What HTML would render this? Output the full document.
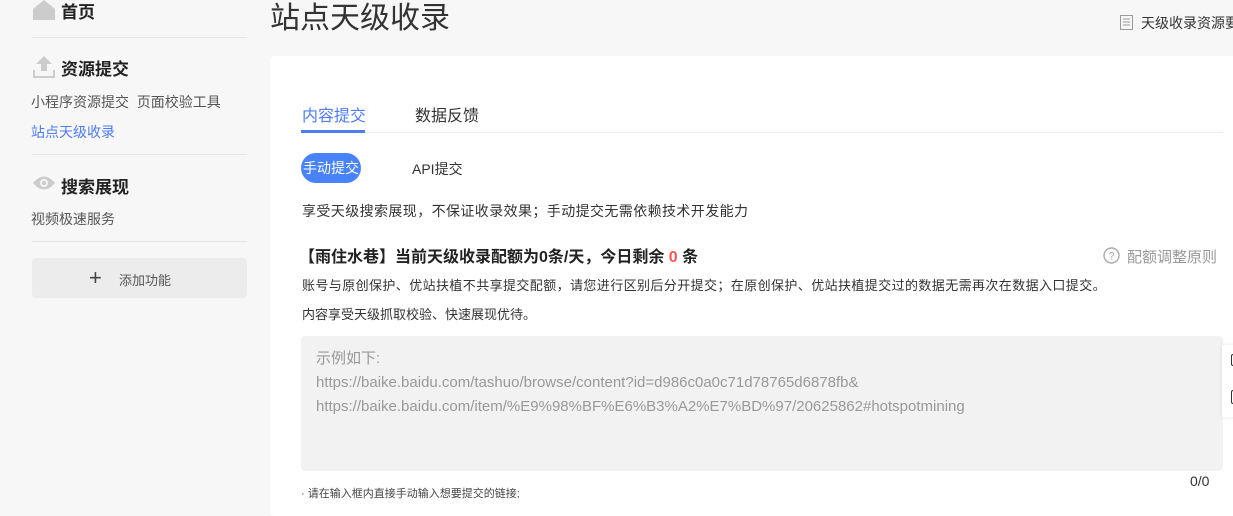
<!DOCTYPE html>
<html><head><meta charset="utf-8"><style>
*{margin:0;padding:0;box-sizing:border-box}
body{width:1233px;height:501px;overflow:hidden;background:#f7f7f7;font-family:"Liberation Sans","Noto Sans CJK SC",sans-serif;color:#333;position:relative}
.a{position:absolute;white-space:nowrap}
.hr{position:absolute;left:32px;width:215px;height:1px;background:#e6e6e6}
</style></head><body>
<svg class="a" style="left:33px;top:0" width="22" height="20" viewBox="0 0 22 20"><path d="M11 0L22 9V20H0V9Z" fill="#ccc"/></svg>
<div class="a" style="left:61px;top:-2px;font-size:17px;font-weight:bold;color:#222">首页</div>
<div class="hr" style="top:37px"></div>
<svg class="a" style="left:33px;top:56px" width="22" height="22" viewBox="0 0 22 22"><path d="M11 0L19 8H14V15H8V8H3Z" fill="#ccc"/><path d="M1 14V21H21V14" fill="none" stroke="#ccc" stroke-width="2"/></svg>
<div class="a" style="left:61px;top:55px;font-size:17px;font-weight:bold;color:#222">资源提交</div>
<div class="a" style="left:31px;top:92px;font-size:14px;color:#555">小程序资源提交&nbsp;&nbsp;页面校验工具</div>
<div class="a" style="left:31px;top:122px;font-size:14px;color:#4e7cf5">站点天级收录</div>
<div class="hr" style="top:154px"></div>
<svg class="a" style="left:33px;top:176px" width="22" height="14" viewBox="0 0 22 14"><path d="M0 7Q11 -6 22 7Q11 20 0 7Z" fill="#ccc"/><circle cx="11" cy="7" r="4" fill="#f7f7f7"/><circle cx="11" cy="7" r="2.3" fill="#ccc"/></svg>
<div class="a" style="left:61px;top:173px;font-size:17px;font-weight:bold;color:#222">搜索展现</div>
<div class="a" style="left:31px;top:209px;font-size:14px;color:#555">视频极速服务</div>
<div class="hr" style="top:241px"></div>
<div class="a" style="left:32px;top:258px;width:215px;height:40px;background:#ececec;border-radius:4px"></div>
<div class="a" style="left:89px;top:267px;font-size:22px;color:#444;line-height:22px">+</div>
<div class="a" style="left:119px;top:270px;font-size:13px;color:#555">添加功能</div>

<div class="a" style="left:270px;top:-7px;font-size:30px;color:#333">站点天级收录</div>
<svg class="a" style="left:1120px;top:15px" width="13" height="15" viewBox="0 0 13 15"><rect x="0.5" y="0.5" width="12" height="14" fill="none" stroke="#999"/><path d="M3 4H10M3 7H10M3 10H10" stroke="#999"/></svg>
<div class="a" style="left:1141px;top:13px;font-size:14px;color:#333">天级收录资源要求</div>

<div class="a" style="left:270px;top:56px;width:970px;height:460px;background:#fff;border-radius:4px"></div>
<div class="a" style="left:302px;top:102px;font-size:16px;color:#4e7cf5">内容提交</div>
<div class="a" style="left:415px;top:102px;font-size:16px;color:#333">数据反馈</div>
<div class="a" style="left:301px;top:132px;width:922px;height:1px;background:#eee"></div>
<div class="a" style="left:301px;top:130px;width:64px;height:3px;background:#4e7cf5"></div>
<div class="a" style="left:301px;top:153px;width:60px;height:30px;border-radius:15px;background:#4883fb;color:#fff;font-size:14px;text-align:center;line-height:30px">手动提交</div>
<div class="a" style="left:412px;top:159px;font-size:14px;color:#333">API提交</div>
<div class="a" style="left:302px;top:201px;font-size:14px;letter-spacing:.4px;color:#333">享受天级搜索展现，不保证收录效果；手动提交无需依赖技术开发能力</div>
<div class="a" style="left:299px;top:243px;font-size:16px;font-weight:bold;color:#222">【雨住水巷】当前天级收录配额为0条/天，今日剩余 <span style="color:#f55">0</span> 条</div>
<svg class="a" style="left:1103px;top:247px" width="17" height="17" viewBox="0 0 17 17"><circle cx="8.5" cy="8.5" r="7.5" fill="none" stroke="#aaa" stroke-width="1.4"/><text x="8.5" y="12.5" font-size="11" text-anchor="middle" fill="#aaa" font-family="Liberation Sans">?</text></svg>
<div class="a" style="left:1127px;top:246px;font-size:15px;color:#999">配额调整原则</div>
<div class="a" style="left:302px;top:275px;font-size:13px;letter-spacing:.4px;color:#333">账号与原创保护、优站扶植不共享提交配额，请您进行区别后分开提交；在原创保护、优站扶植提交过的数据无需再次在数据入口提交。</div>
<div class="a" style="left:302px;top:304px;font-size:13px;color:#333">内容享受天级抓取校验、快速展现优待。</div>
<div class="a" style="left:301px;top:336px;width:922px;height:135px;background:#f2f2f2;border-radius:4px"></div>
<div class="a" style="left:316px;top:347px;font-size:15px;color:#999;line-height:24px">示例如下:<br>https://baike.baidu.com/tashuo/browse/content?id=d986c0a0c71d78765d6878fb&amp;<br>https://baike.baidu.com/item/%E9%98%BF%E6%B3%A2%E7%BD%97/20625862#hotspotmining</div>
<div class="a" style="left:1222px;top:345px;width:15px;height:72px;background:#fff;box-shadow:0 0 4px rgba(0,0,0,.1)"></div>
<div class="a" style="left:1231px;top:354px;width:5px;height:12px;border:1.5px solid #333;border-right:none;border-radius:2px"></div>
<div class="a" style="left:1231px;top:390px;width:5px;height:14px;border:1.5px solid #333;border-right:none;border-radius:2px"></div>
<div class="a" style="left:1190px;top:473px;font-size:14px;color:#333">0/0</div>
<div class="a" style="left:301px;top:485px;font-size:11px;color:#444">· 请在输入框内直接手动输入想要提交的链接;</div>
</body></html>
